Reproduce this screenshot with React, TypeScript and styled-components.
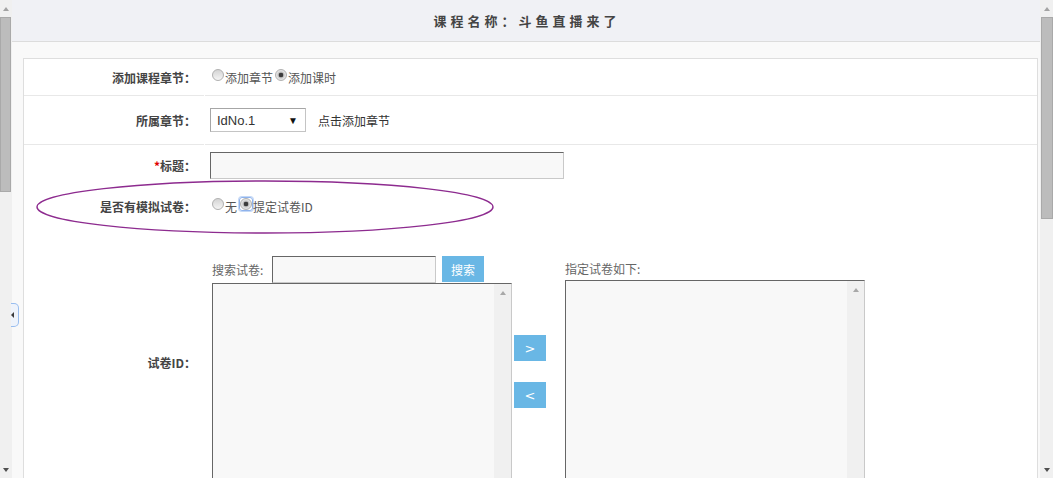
import React from "react";
import styled, { createGlobalStyle } from "styled-components";

const GlobalStyle = createGlobalStyle`
  html, body { margin: 0; padding: 0; background: #fff; }
  body {
    font-family: "Noto Sans CJK SC", "Liberation Sans", sans-serif;
    font-size: 12px;
    color: #555;
  }
  * { box-sizing: border-box; }
`;

const Frame = styled.div`
  position: relative;
  display: flex;
  width: 1053px;
  height: 478px;
  overflow: hidden;
`;

const ScrollBar = styled.div<{ $side: "left" | "right" }>`
  flex: none;
  width: ${(p) => (p.$side === "left" ? 12 : 13)}px;
  background: #f0f0f0;
  display: flex;
  flex-direction: column;
  align-items: stretch;
`;

const ArrowCell = styled.div`
  height: 17px;
  display: flex;
  align-items: center;
  justify-content: center;
  flex: none;
`;

const Triangle = styled.span<{ $dir: "up" | "down" | "left"; $color: string; $size?: number }>`
  width: 0;
  height: 0;
  display: block;
  ${(p) => {
    const s = p.$size ?? 3.5;
    if (p.$dir === "up")
      return `border-left:${s}px solid transparent;border-right:${s}px solid transparent;border-bottom:${s + 0.5}px solid ${p.$color};`;
    if (p.$dir === "down")
      return `border-left:${s}px solid transparent;border-right:${s}px solid transparent;border-top:${s + 0.5}px solid ${p.$color};`;
    return `border-top:${s}px solid transparent;border-bottom:${s}px solid transparent;border-right:${s}px solid ${p.$color};`;
  }}
`;

const Thumb = styled.div<{ $side: "left" | "right"; $height: number }>`
  flex: none;
  height: ${(p) => p.$height}px;
  margin: ${(p) => (p.$side === "left" ? "0 1px 0 0" : "0 0 0 1px")};
  background: #bcbcbc;
  border: 1px solid #a9a9a9;
`;

const Track = styled.div`
  flex: 1;
`;

const Page = styled.div`
  flex: 1;
  display: flex;
  flex-direction: column;
  background: #f9f9f9;
  min-width: 0;
`;

const Header = styled.div`
  flex: none;
  height: 42px;
  background: #f0f1f5;
  border-bottom: 1px solid #dcdcdc;
  display: flex;
  align-items: center;
  justify-content: center;
  padding-left: 2px;
`;

const Title = styled.h1`
  margin: 0;
  font-size: 13px;
  font-weight: bold;
  letter-spacing: 4px;
  color: #444;
`;

const Body = styled.div`
  flex: 1;
  padding: 16px 2px 0 11px;
  min-height: 0;
`;

const Panel = styled.div`
  background: #fff;
  border: 1px solid #dedede;
`;

const FormRow = styled.div<{ $height?: number; $bordered?: boolean }>`
  display: grid;
  grid-template-columns: 180px 1fr;
  column-gap: 1px;
  ${(p) => (p.$height ? `height: ${p.$height + (p.$bordered ? 1 : 0)}px;` : "")}
`;

const LabelCell = styled.div<{ $bordered?: boolean }>`
  display: flex;
  align-items: center;
  justify-content: flex-end;
  padding-right: 8px;
  font-weight: bold;
  color: #444;
  font-size: 12px;
  border-bottom: ${(p) => (p.$bordered ? "1px solid #e8e8e8" : "none")};
`;

const Required = styled.span`
  color: #e00000;
  font-weight: bold;
`;

const ValueCell = styled.div<{ $bordered?: boolean }>`
  display: flex;
  align-items: center;
  padding-left: 5px;
  color: #555;
  border-bottom: ${(p) => (p.$bordered ? "1px solid #e8e8e8" : "none")};
`;

const TransferCell = styled.div`
  display: flex;
  align-items: flex-start;
  padding: 30px 0 5px 7px;
`;

const Radio = styled.input.attrs({ type: "radio" })`
  appearance: none;
  -webkit-appearance: none;
  flex: none;
  width: 12px;
  height: 12px;
  margin: 0 1px 4px 2px;
  border-radius: 50%;
  border: 1px solid #b0b0b0;
  background: linear-gradient(#d4d4d4, #f5f5f5);
  &:checked {
    background: radial-gradient(circle, #3c3c3c 0 2px, #b8b8b8 2.6px, #e0e0e0 4px, #f2f2f2 100%);
  }
`;

const FocusRing = styled.span`
  display: inline-flex;
  flex: none;
  margin: 0 0 4px 2px;
  border: 1px solid #8fb3ec;
  box-shadow: 0 0 0 1px #c4d8f6;
  border-radius: 3px;
  ${Radio} {
    margin: 0;
  }
`;

const OptionText = styled.span`
  color: #555;
  white-space: nowrap;
`;

const SelectBox = styled.div`
  width: 96px;
  height: 24px;
  border: 1px solid #a6a6a6;
  border-right-color: #c4c4c4;
  border-bottom-color: #c4c4c4;
  background: #fff;
  display: flex;
  align-items: center;
  justify-content: space-between;
  padding: 0 7px 0 6px;
  font-family: "Liberation Sans", Arial, sans-serif;
  font-size: 13px;
  color: #333;
`;

const SelectArrow = styled.span`
  font-size: 10px;
  color: #111;
`;

const HintText = styled.span`
  margin-left: 12px;
  color: #333;
`;

const TextInput = styled.input<{ $width: number }>`
  width: ${(p) => p.$width}px;
  height: 27px;
  margin: 0;
  padding: 0 4px;
  border: 1px solid #666;
  border-right-color: #c9c9c9;
  border-bottom-color: #c9c9c9;
  background: #f8f8f8;
  outline: none;
  flex: none;
`;

const SourceColumn = styled.div`
  display: flex;
  flex-direction: column;
`;

const SearchLine = styled.div`
  display: flex;
  align-items: center;
  height: 27px;
`;

const SearchLabel = styled.span`
  width: 60px;
  color: #666;
`;

const BlueButton = styled.button<{ $w: number }>`
  width: ${(p) => p.$w}px;
  height: 26px;
  margin: 0;
  padding: 0;
  border: none;
  background: #69b7e5;
  color: #fff;
  font-family: "Noto Sans CJK SC", "Liberation Sans", sans-serif;
  font-size: 12px;
  flex: none;
  cursor: pointer;
`;

const ArrowButton = styled(BlueButton)`
  font-family: "DejaVu Sans", sans-serif;
  font-size: 13px;
`;

const SearchButton = styled(BlueButton)`
  margin-left: 6px;
  align-self: flex-start;
`;

const MoveButtons = styled.div`
  display: flex;
  flex-direction: column;
  gap: 21px;
  padding-top: 79px;
  margin: 0 19px 0 2px;
`;

const TargetColumn = styled.div`
  display: flex;
  flex-direction: column;
`;

const TargetLabel = styled.div`
  height: 24px;
  display: flex;
  align-items: center;
  color: #666;
`;

const ListBox = styled.div`
  width: 300px;
  height: 210px;
  border: 1px solid #666;
  border-right-color: #c9c9c9;
  border-bottom-color: #c9c9c9;
  background: #f8f8f8;
  display: flex;
  justify-content: flex-end;
`;

const ListScroll = styled.div`
  width: 17px;
  background: #f0f0f0;
  display: flex;
  flex-direction: column;
  justify-content: space-between;
`;

const ListArrow = styled.div`
  height: 17px;
  display: flex;
  align-items: center;
  justify-content: center;
`;

const CollapseTab = styled.div`
  position: absolute;
  left: 11px;
  top: 303px;
  width: 8px;
  height: 24px;
  background: #eef3fb;
  border: 1px solid #98bdef;
  border-left: none;
  border-radius: 0 5px 5px 0;
  display: flex;
  align-items: center;
`;

const Annotation = styled.svg`
  position: absolute;
  left: 35px;
  top: 179px;
  pointer-events: none;
`;

const List = () => (
  <ListBox>
    <ListScroll>
      <ListArrow>
        <Triangle $dir="up" $color="#a8a8a8" />
      </ListArrow>
      <ListArrow>
        <Triangle $dir="down" $color="#a8a8a8" />
      </ListArrow>
    </ListScroll>
  </ListBox>
);

const Bar = ({ side, thumb }: { side: "left" | "right"; thumb: number }) => (
  <ScrollBar $side={side}>
    <ArrowCell>
      <Triangle $dir="up" $color="#a3a3a3" />
    </ArrowCell>
    <Thumb $side={side} $height={thumb} />
    <Track />
    <ArrowCell>
      <Triangle $dir="down" $color="#4f4f4f" />
    </ArrowCell>
  </ScrollBar>
);

export default function App() {
  return (
    <>
      <GlobalStyle />
      <Frame>
        <Bar side="left" thumb={175} />
        <Page>
          <Header>
            <Title>课程名称：斗鱼直播来了</Title>
          </Header>
          <Body>
            <Panel>
              <FormRow $height={36} $bordered>
                <LabelCell $bordered>添加课程章节：</LabelCell>
                <ValueCell $bordered>
                  <Radio name="kind" />
                  <OptionText>添加章节</OptionText>
                  <Radio name="kind" defaultChecked />
                  <OptionText>添加课时</OptionText>
                </ValueCell>
              </FormRow>
              <FormRow $height={48} $bordered>
                <LabelCell $bordered>所属章节：</LabelCell>
                <ValueCell $bordered>
                  <SelectBox>
                    <span>IdNo.1</span>
                    <SelectArrow>▼</SelectArrow>
                  </SelectBox>
                  <HintText>点击添加章节</HintText>
                </ValueCell>
              </FormRow>
              <FormRow $height={41}>
                <LabelCell>
                  <Required>*</Required>标题：
                </LabelCell>
                <ValueCell>
                  <TextInput $width={354} />
                </ValueCell>
              </FormRow>
              <FormRow $height={40}>
                <LabelCell>是否有模拟试卷：</LabelCell>
                <ValueCell>
                  <Radio name="mock" />
                  <OptionText>无</OptionText>
                  <FocusRing>
                    <Radio name="mock" defaultChecked />
                  </FocusRing>
                  <OptionText>提定试卷ID</OptionText>
                </ValueCell>
              </FormRow>
              <FormRow>
                <LabelCell>试卷ID：</LabelCell>
                <TransferCell>
                  <SourceColumn>
                    <SearchLine>
                      <SearchLabel>搜索试卷:</SearchLabel>
                      <TextInput $width={164} />
                      <SearchButton $w={42}>搜索</SearchButton>
                    </SearchLine>
                    <List />
                  </SourceColumn>
                  <MoveButtons>
                    <ArrowButton $w={32}>&gt;</ArrowButton>
                    <ArrowButton $w={32}>&lt;</ArrowButton>
                  </MoveButtons>
                  <TargetColumn>
                    <TargetLabel>指定试卷如下:</TargetLabel>
                    <List />
                  </TargetColumn>
                </TransferCell>
              </FormRow>
            </Panel>
          </Body>
        </Page>
        <Bar side="right" thumb={202} />
        <CollapseTab>
          <Triangle $dir="left" $color="#3a3a3a" $size={3} />
        </CollapseTab>
        <Annotation width={460} height={56} viewBox="0 0 460 56">
          <ellipse cx={230} cy={28} rx={228} ry={26} fill="none" stroke="#8d2b8f" strokeWidth={1.4} />
        </Annotation>
      </Frame>
    </>
  );
}
